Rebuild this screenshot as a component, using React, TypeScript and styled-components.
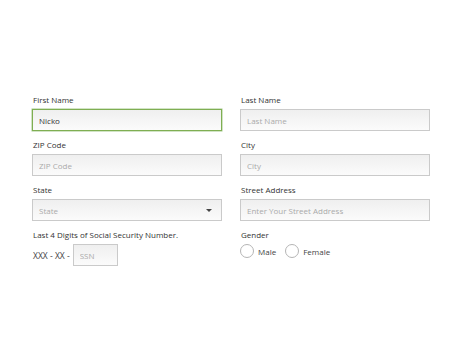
import React, { useState } from 'react'
import styled, { createGlobalStyle } from 'styled-components'

const GlobalStyle = createGlobalStyle`
    html, body {
        margin: 0;
        padding: 0;
        background: #ffffff;
        font-family: "Open Sans", "Noto Sans", Arial, sans-serif;
    }
`

const Page = styled.div`
    width: 460px;
    height: 360px;
    box-sizing: border-box;
    padding: 95px 0 0 32px;
`

const FormGrid = styled.form`
    display: grid;
    grid-template-columns: 190px 190px;
    column-gap: 18px;
    row-gap: 9px;
`

const Field = styled.div`
    display: flex;
    flex-direction: column;
    gap: 4px;
`

const Label = styled.label`
    font-size: 8px;
    line-height: 10px;
    color: #333;
    padding-left: 1px;
`

const Input = styled.input<{ $focused?: boolean }>`
    box-sizing: border-box;
    width: ${p => p.width ? `${p.width}px` : '100%'};
    height: 22px;
    margin: 0;
    padding: 0 6px;
    font-family: inherit;
    font-size: 8px;
    color: #333;
    border: 1px solid ${p => p.$focused ? '#7fae52' : '#cacaca'};
    box-shadow: ${p => p.$focused ? '0 0 0 0.5px #a3c98a' : 'none'};
    background: linear-gradient(to bottom, #efefef, #fbfbfb);
    outline: none;
    &::placeholder {
        color: #aaa;
    }
`

const SelectBox = styled.div`
    box-sizing: border-box;
    height: 22px;
    padding: 0 6px;
    display: flex;
    align-items: center;
    justify-content: space-between;
    font-size: 8px;
    color: #aaa;
    border: 1px solid #cacaca;
    background: linear-gradient(to bottom, #efefef, #fbfbfb);
`

const Caret = styled.span`
    width: 0;
    height: 0;
    margin-right: 3px;
    border-left: 3px solid transparent;
    border-right: 3px solid transparent;
    border-top: 3px solid #444;
`

const SsnRow = styled.div`
    display: flex;
    align-items: center;
    gap: 3px;
    font-size: 8.5px;
    color: #444;
    padding-left: 1px;
`

const RadioRow = styled.div`
    display: flex;
    align-items: center;
    gap: 9px;
`

const RadioOption = styled.label`
    display: flex;
    align-items: center;
    gap: 4px;
    font-size: 8px;
    color: #444;
`

const RadioCircle = styled.span`
    box-sizing: border-box;
    width: 14px;
    height: 14px;
    border-radius: 50%;
    border: 1px solid #b5b5b5;
    background: #fff;
`

export default function App() {
    const [firstName, setFirstName] = useState('Nicko')
    return (
        <Page>
            <GlobalStyle />
            <FormGrid onSubmit={e => e.preventDefault()}>
                <Field>
                    <Label>First Name</Label>
                    <Input $focused value={firstName} onChange={e => setFirstName(e.target.value)} />
                </Field>
                <Field>
                    <Label>Last Name</Label>
                    <Input placeholder="Last Name" />
                </Field>
                <Field>
                    <Label>ZIP Code</Label>
                    <Input placeholder="ZIP Code" />
                </Field>
                <Field>
                    <Label>City</Label>
                    <Input placeholder="City" />
                </Field>
                <Field>
                    <Label>State</Label>
                    <SelectBox>
                        State
                        <Caret />
                    </SelectBox>
                </Field>
                <Field>
                    <Label>Street Address</Label>
                    <Input placeholder="Enter Your Street Address" />
                </Field>
                <Field>
                    <Label>Last 4 Digits of Social Security Number.</Label>
                    <SsnRow>
                        XXX - XX -
                        <Input width={45} placeholder="SSN" />
                    </SsnRow>
                </Field>
                <Field>
                    <Label>Gender</Label>
                    <RadioRow>
                        <RadioOption><RadioCircle />Male</RadioOption>
                        <RadioOption><RadioCircle />Female</RadioOption>
                    </RadioRow>
                </Field>
            </FormGrid>
        </Page>
    )
}
